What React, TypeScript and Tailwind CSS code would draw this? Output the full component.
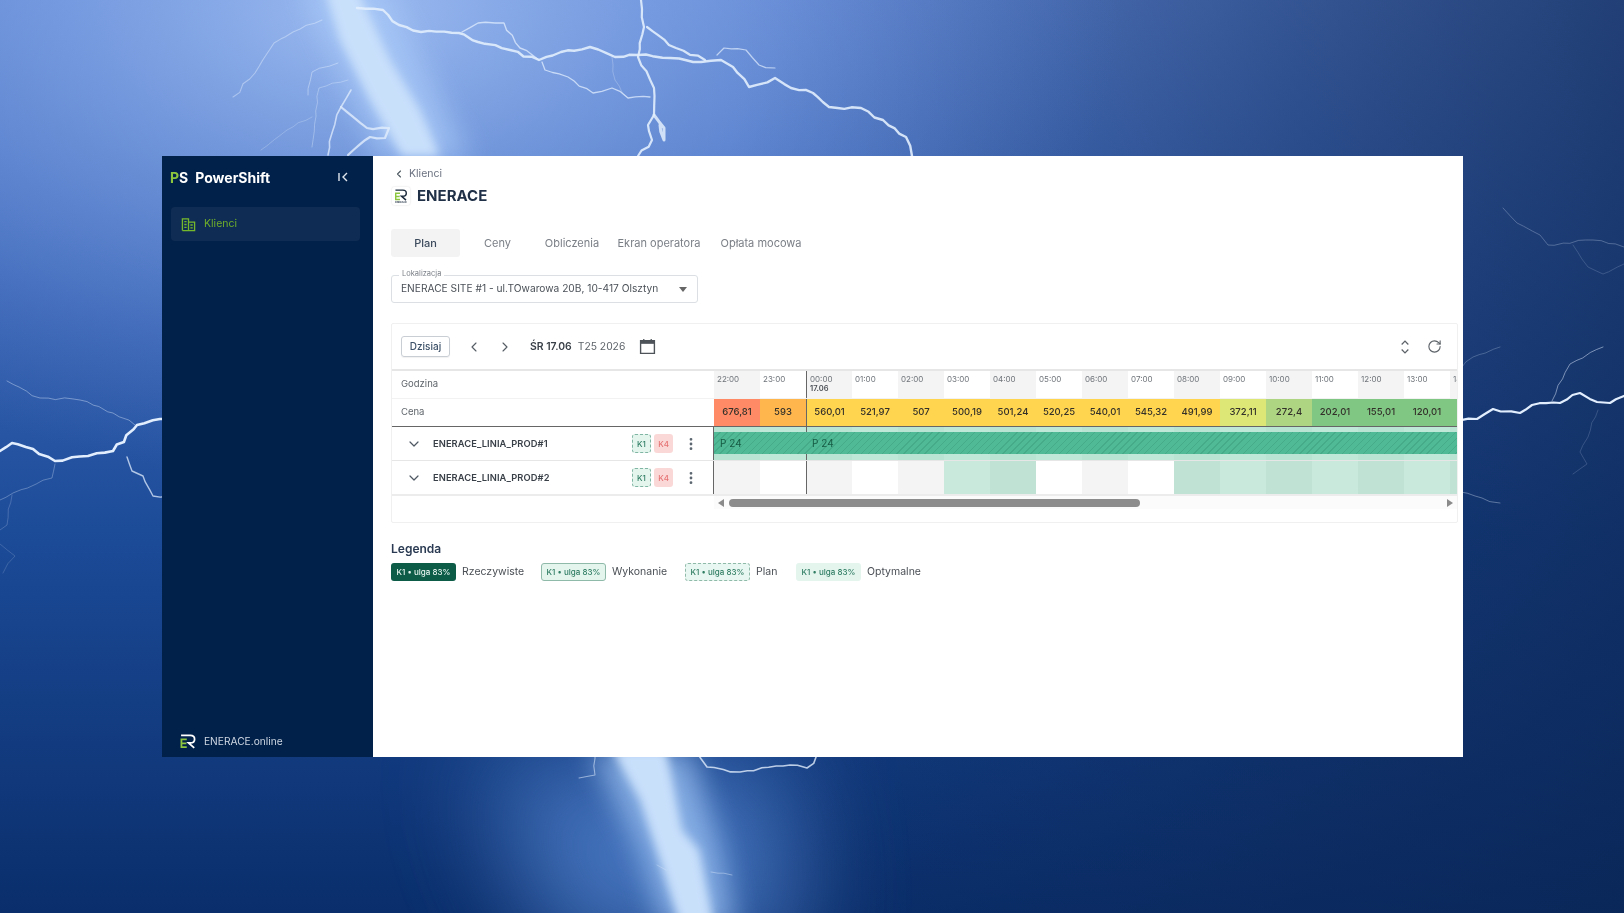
import React from "react";
import { ChevronDown, ChevronLeft, ChevronRight, EllipsisVertical, RotateCw } from "lucide-react";

const bolts: [string, number, number][] = [
  ["357,8 383,10 399,25 421,32 459,33 478,42 510,50 539,60 561,52 590,47 615,57 638,55 670,58 701,62 721,60 733,67 749,87 775,78 791,88 813,93 829,107 861,108 883,120 906,137 912,156", 2.4, 0.9],
  ["641,0 644,27 638,57 654,88 654,115 648,125 652,140 638,156", 2.2, 0.9],
  ["654,115 664,128 664,140 660,125", 3, 0.85],
  ["647,27 676,48 705,60", 2.2, 0.9],
  ["717,55 724,48 746,50 759,65 775,68", 1.2, 0.7],
  ["462,32 478,23 504,23 520,48 539,60", 1.4, 0.75],
  ["542,62 545,70 568,77 593,93 612,88 628,98 650,97", 1.3, 0.75],
  ["612,57 615,80 628,98", 0.7, 0.4],
  ["322,20 293,32 274,43 255,73 233,97", 1.1, 0.45],
  ["338,63 312,72 308,95", 0.9, 0.5],
  ["348,80 319,88 312,147", 0.9, 0.4],
  ["351,90 341,107 332,133 328,155", 1.6, 0.75],
  ["341,107 367,128 389,128 385,138 370,137 348,155", 2.2, 0.8],
  ["312,117 287,130 261,150", 0.8, 0.35],
  ["0,451 12,443 33,449 55,461 88,456 113,451 137,425 160,419 170,419", 2.6, 1],
  ["7,381 40,398 80,400 113,413 135,425", 0.9, 0.45],
  ["127,457 132,471 143,476 153,496 170,496", 1.4, 0.75],
  ["55,464 52,478 13,493 0,500", 0.9, 0.35],
  ["12,495 7,525 0,530", 0.7, 0.3],
  ["0,544 15,556 3,573", 0.7, 0.25],
  ["1455,420 1477,419 1493,409 1520,413 1532,405 1560,403 1580,393 1597,402 1610,403 1624,396", 2.2, 1],
  ["1552,401 1570,364 1603,347", 1, 0.5],
  ["1503,208 1517,223 1540,235 1548,245 1593,240 1624,247", 0.8, 0.35],
  ["1573,245 1588,267 1603,274 1624,264", 0.7, 0.25],
  ["1455,374 1473,357 1500,347", 0.8, 0.3],
  ["1455,490 1482,498 1500,503", 0.9, 0.4],
  ["1598,410 1588,437 1580,452 1587,464 1573,474", 0.7, 0.25],
  ["695,750 707,767 740,772 790,765 807,768 823,750", 1.6, 0.8],
  ["595,750 595,775 579,778", 1.1, 0.55],
  ["657,865 666,870", 0.9, 0.35],
  ["711,872 732,875", 0.9, 0.45],
];

function jag(points: string) {
  const pts = points.split(" ").map((p) => p.split(",").map(Number));
  const out: string[] = [];
  let seed = 7;
  const rnd = () => {
    seed = (seed * 9301 + 49297) % 233280;
    return seed / 233280 - 0.5;
  };
  pts.forEach(([x, y], i) => {
    out.push(`${x},${y}`);
    const next = pts[i + 1];
    if (!next) return;
    const len = Math.hypot(next[0] - x, next[1] - y);
    const n = Math.floor(len / 7);
    for (let k = 1; k < n; k++) {
      const t = k / n;
      out.push(`${(x + (next[0] - x) * t + rnd() * 3).toFixed(1)},${(y + (next[1] - y) * t + rnd() * 3).toFixed(1)}`);
    }
  });
  return out.join(" ");
}

function Background() {
  return (
    <svg className="absolute inset-0" width="1624" height="913" viewBox="0 0 1624 913">
      <defs>
        <linearGradient id="sky" x1="0" y1="0" x2="0" y2="1">
          <stop offset="0" stopColor="#5d84d2" />
          <stop offset="0.3" stopColor="#3b66b6" />
          <stop offset="0.58" stopColor="#1c4b98" />
          <stop offset="1" stopColor="#0a2e6b" />
        </linearGradient>
        <linearGradient id="shade" x1="0" y1="0" x2="1" y2="0">
          <stop offset="0.45" stopColor="#0b2553" stopOpacity="0" />
          <stop offset="0.8" stopColor="#0b2553" stopOpacity="0.5" />
          <stop offset="1" stopColor="#0b2553" stopOpacity="0.72" />
        </linearGradient>
        <radialGradient id="top" gradientUnits="userSpaceOnUse" cx="360" cy="20" r="760" gradientTransform="scale(1 0.62)">
          <stop offset="0" stopColor="#a6c4f5" stopOpacity="0.85" />
          <stop offset="0.55" stopColor="#7fa3e6" stopOpacity="0.42" />
          <stop offset="1" stopColor="#5d84d2" stopOpacity="0" />
        </radialGradient>
        <filter id="b60" x="-200%" y="-200%" width="500%" height="500%"><feGaussianBlur stdDeviation="55" /></filter>
        <filter id="b14" x="-100%" y="-100%" width="300%" height="300%"><feGaussianBlur stdDeviation="14" /></filter>
        <filter id="b5" x="-50%" y="-50%" width="200%" height="200%"><feGaussianBlur stdDeviation="5" /></filter>
        <filter id="b05" x="-10%" y="-10%" width="120%" height="120%"><feGaussianBlur stdDeviation="0.45" /></filter>
      </defs>
      <rect width="1624" height="913" fill="url(#sky)" />
      <rect width="1624" height="913" fill="url(#shade)" />
      <rect width="1624" height="600" fill="url(#top)" />
      <polygon points="480,760 780,760 800,960 560,960" fill="#5f92e0" opacity="0.7" filter="url(#b60)" />
      <polygon points="300,-20 380,-20 470,160 380,160" fill="#a9c9f8" opacity="0.75" filter="url(#b14)" />
      <polygon points="325,-10 357,-10 390,60 420,110 440,156 402,156 370,100 340,40" fill="#c9e0fb" filter="url(#b5)" />
      <polygon points="590,750 690,750 720,850 735,930 665,930 640,850" fill="#9cc2f3" opacity="0.75" filter="url(#b14)" />
      <polygon points="612,750 666,750 682,830 699,850 715,930 682,930 660,860 640,800" fill="#c9e0fb" filter="url(#b5)" />
      <g filter="url(#b05)" fill="none" strokeLinejoin="round" strokeLinecap="round">
        {bolts.map(([p, w, o], i) => (
          <polyline key={i} points={jag(p)} stroke="#e2eefd" strokeWidth={w} strokeOpacity={o} />
        ))}
      </g>
    </svg>
  );
}

function ErLogo({ top, className }: { top: string; className: string }) {
  return (
    <svg viewBox="0 0 45 42" className={className} fill="none">
      <path d="M3 4H29C36 4 41 8 41 14.5S36 25 29 25H24L40 39" stroke={top} strokeWidth="5" />
      <path d="M19 15H4V37H19M4 26H18" stroke="#8cc63f" strokeWidth="5" />
    </svg>
  );
}

const hours = ["22:00", "23:00", "00:00", "01:00", "02:00", "03:00", "04:00", "05:00", "06:00", "07:00", "08:00", "09:00", "10:00", "11:00", "12:00", "13:00", "14:00"];
const prices: [string, string][] = [
  ["676,81", "bg-[#ff8a65]"],
  ["593", "bg-[#ffb74d]"],
  ["560,01", "bg-[#ffd54f]"],
  ["521,97", "bg-[#ffd54f]"],
  ["507", "bg-[#ffd54f]"],
  ["500,19", "bg-[#ffd54f]"],
  ["501,24", "bg-[#ffd54f]"],
  ["520,25", "bg-[#ffd54f]"],
  ["540,01", "bg-[#ffd54f]"],
  ["545,32", "bg-[#ffd54f]"],
  ["491,99", "bg-[#ffd54f]"],
  ["372,11", "bg-[#dce775]"],
  ["272,4", "bg-[#aed581]"],
  ["202,01", "bg-[#81c784]"],
  ["155,01", "bg-[#81c784]"],
  ["120,01", "bg-[#81c784]"],
  ["", "bg-[#81c784]"],
];
const greenRow2 = new Set([5, 6, 10, 11, 12, 13, 14, 15, 16]);

function RowHead({ name }: { name: string }) {
  return (
    <div className="w-[322px] shrink-0 flex items-center h-full">
      <ChevronDown className="ml-[14px] w-[16px] h-[16px] text-[#4f5963] shrink-0" strokeWidth={1.8} />
      <span className="ml-[11px] flex-1 text-[9.3px] font-semibold text-[#3a4048] tracking-[0.1px]">{name}</span>
      <span className="w-[19px] h-[19px] flex items-center justify-center rounded-[3px] border border-dashed border-[#7fb5a2] bg-[#e4f5ee] text-[8px] font-medium text-[#2f7d63]">K1</span>
      <span className="ml-[3px] w-[19px] h-[19px] flex items-center justify-center rounded-[3px] bg-[#fbd8d8] text-[8px] font-medium text-[#e57373]">K4</span>
      <EllipsisVertical className="ml-[10px] mr-[15px] w-[16px] h-[16px] text-[#5c6670]" strokeWidth={2.2} />
    </div>
  );
}

function LegendItem({ badge, label, className }: { badge: string; label: string; className?: string }) {
  return (
    <div className={`flex items-center ${className ?? ""}`}>
      <span className={`w-[65px] h-[18px] rounded-[3px] flex items-center justify-center text-[8px] font-medium ${badge}`}>K1 • ulga 83%</span>
      <span className="ml-[6px] text-[10.5px] text-[#4a4f55]">{label}</span>
    </div>
  );
}

export default function App() {
  return (
    <div className="relative w-full h-[913px] overflow-hidden bg-[#0f3a7c] font-['Inter',sans-serif]">
      <Background />
      <div className="relative pt-[156px] pl-[162px] blur-[0.35px]">
        <div className="flex w-[1301px] h-[601px]">
          <aside className="w-[211px] shrink-0 flex flex-col bg-[#02214a]">
            <div className="h-[42px] flex items-center pl-[8px]">
              <span className="text-[14px] font-bold"><span className="text-[#8cc63f]">P</span><span className="text-white">S</span></span>
              <span className="ml-[7px] text-[14px] font-bold text-white">PowerShift</span>
              <svg viewBox="0 0 14 14" className="ml-auto mr-[23px] w-[14px] h-[14px]" fill="none" stroke="#dfe6ee" strokeWidth="1.4">
                <path d="M3 3V11M11 3L7 7L11 11" />
              </svg>
            </div>
            <div className="ml-[9px] mr-[13px] mt-[9px] h-[34px] rounded-[4px] bg-[#0f2c54] flex items-center pl-[10px]">
              <svg viewBox="0 0 16 16" className="w-[15px] h-[15px]" fill="none" stroke="#76b82c" strokeWidth="1.4">
                <path d="M1.5 14.5V2H8V14.5M8 5.5H14.5V14.5H1.5M3.5 5H6M3.5 8H6M3.5 11H6M10 8.5H12.5M10 11.5H12.5" />
              </svg>
              <span className="ml-[8px] text-[10.5px] text-[#6fae2a]">Klienci</span>
            </div>
            <div className="mt-auto mb-[8px] pl-[18px] flex items-center">
              <ErLogo top="#ffffff" className="w-[16px] h-[15px]" />
              <span className="ml-[8px] text-[10.2px] text-[#cdd6e2]">ENERACE.online</span>
            </div>
          </aside>
          <main className="flex-1 min-w-0 bg-white flex flex-col pl-[18px] pr-[5px]">
            <div className="mt-[10px] h-[16px] flex items-center pl-[2px] text-[#6b7280]">
              <ChevronLeft className="w-[12px] h-[12px] text-[#4f5963]" strokeWidth={2.2} />
              <span className="ml-[4px] text-[10.5px]">Klienci</span>
            </div>
            <div className="mt-[5px] h-[18px] flex items-center">
              <div className="w-[18px] h-[18px] ml-[1px] flex flex-col items-center justify-center rounded-[2px] shadow-[0_0_2px_rgba(0,0,0,0.15)]">
                <ErLogo top="#1b2a3d" className="w-[14px] h-[12px]" />
                <span className="text-[2.5px] leading-[3px] font-semibold text-[#1b2a3d]">ENERACE</span>
              </div>
              <span className="ml-[7px] text-[15px] font-bold text-[#1f3047]">ENERACE</span>
            </div>
            <div className="mt-[24px] h-[28px] flex items-center text-[11px] text-[#7a7f86]">
              <div className="w-[69px] h-full rounded-[3px] bg-[#f3f3f4] flex items-center justify-center font-medium text-[#3b4a5c]">Plan</div>
              <div className="w-[75px] text-center">Ceny</div>
              <div className="w-[74px] text-center">Obliczenia</div>
              <div className="w-[100px] text-center">Ekran operatora</div>
              <div className="ml-[2px] w-[100px] text-center">Opłata mocowa</div>
            </div>
            <div className="relative mt-[18px] w-[307px] h-[28px] rounded-[3px] border border-[#dcdfe3] flex items-center pl-[9px] pr-[10px]">
              <span className="absolute -top-[7px] left-[7px] bg-white px-[3px] text-[7.5px] leading-[10px] text-[#7a7f86]">Lokalizacja</span>
              <span className="flex-1 text-[10.2px] text-[#4b5158]">ENERACE SITE #1 - ul.TOwarowa 20B, 10-417 Olsztyn</span>
              <svg viewBox="0 0 8 5" className="w-[8px] h-[5px]"><path d="M0 0H8L4 5Z" fill="#666" /></svg>
            </div>
            <section className="mt-[20px] h-[200px] rounded-[2px] border border-[#f0f0f0] flex flex-col">
              <div className="h-[47px] shrink-0 border-b-2 border-[#e6e6e6] flex items-center pl-[9px] pr-[14px]">
                <button className="w-[49px] h-[21px] rounded-[3px] border border-[#c9ced4] shadow-[0_1px_1px_rgba(0,0,0,0.06)] text-[10px] font-medium text-[#3c5068]">Dzisiaj</button>
                <ChevronLeft className="ml-[16px] w-[16px] h-[16px] text-[#555c64]" strokeWidth={1.7} />
                <ChevronRight className="ml-[15px] w-[16px] h-[16px] text-[#555c64]" strokeWidth={1.7} />
                <span className="ml-[17px] text-[10.4px] font-semibold text-[#3a4048]">ŚR 17.06</span>
                <span className="ml-[6px] text-[10.3px] text-[#5d6369]">T25 2026</span>
                <svg viewBox="0 0 16 16" className="ml-[14px] w-[17px] h-[17px]" fill="none">
                  <path d="M1.5 2.5H14.5V14.5H1.5Z" stroke="#4d5359" strokeWidth="1.3" />
                  <path d="M1.5 2.5H14.5V5.5H1.5Z" fill="#4d5359" />
                  <path d="M4.5 1V3M11.5 1V3" stroke="#4d5359" strokeWidth="1.2" />
                </svg>
                <svg viewBox="0 0 12 18" className="ml-auto w-[10px] h-[16px]" fill="none" stroke="#5c6268" strokeWidth="1.5">
                  <path d="M2 6L6 2L10 6M2 12L6 16L10 12" />
                </svg>
                <RotateCw className="ml-[17px] mr-[1px] w-[15px] h-[15px] text-[#5c6268]" strokeWidth={1.8} />
              </div>
              <div className="h-[28px] shrink-0 flex border-b border-[#f2f2f2]">
                <div className="w-[322px] shrink-0 flex items-center pl-[9px] text-[9.5px] text-[#5f656b]">Godzina</div>
                <div className="flex-1 min-w-0 flex overflow-hidden">
                  {hours.map((h, i) => (
                    <div key={h} className={`w-[46px] shrink-0 pl-[3px] pt-[3px] text-[8px] leading-[10px] text-[#6f747a] ${i % 2 === 0 ? "bg-[#f4f4f4]" : ""} ${i === 2 ? "border-l border-[#666]" : ""}`}>
                      <div>{h}</div>
                      {i === 2 && <div className="font-semibold text-[7.5px] text-[#4a4f55]">17.06</div>}
                    </div>
                  ))}
                </div>
              </div>
              <div className="h-[28px] shrink-0 flex border-b border-[#666]">
                <div className="w-[322px] shrink-0 flex items-center pl-[9px] text-[9.5px] text-[#5f656b]">Cena</div>
                <div className="flex-1 min-w-0 flex overflow-hidden">
                  {prices.map(([p, c], i) => (
                    <div key={i} className={`w-[46px] shrink-0 flex items-center justify-center text-[9.5px] font-medium text-[#33302a] ${c} ${i === 2 ? "border-l border-[#666]" : ""}`}>{p}</div>
                  ))}
                </div>
              </div>
              <div className="h-[34px] shrink-0 flex border-b border-[#e6e6e6]">
                <RowHead name="ENERACE_LINIA_PROD#1" />
                <div className="relative flex-1 min-w-0 flex overflow-hidden border-l border-[#666] -ml-px">
                  {hours.map((h, i) => (
                    <div key={h} className={`w-[46px] shrink-0 ${i % 2 === 0 ? "bg-[#b9e3d3]" : "bg-[#c0e8d9]"} ${i === 2 ? "border-l border-[#666]" : ""}`} />
                  ))}
                  <div className="absolute left-0 right-0 top-[5px] h-[22px] flex items-center text-[10px] text-[#175c45] bg-[repeating-linear-gradient(135deg,#4fba95_0px,#4fba95_4px,#45ab88_4px,#45ab88_5px)]">
                    <span className="w-[92px] pl-[6px]">P 24</span>
                    <span className="pl-[6px]">P 24</span>
                  </div>
                </div>
              </div>
              <div className="h-[35px] shrink-0 flex border-b-2 border-[#ececec]">
                <RowHead name="ENERACE_LINIA_PROD#2" />
                <div className="flex-1 min-w-0 flex overflow-hidden border-l border-[#666] -ml-px">
                  {hours.map((h, i) => (
                    <div key={h} className={`w-[46px] shrink-0 ${greenRow2.has(i) ? (i % 2 === 0 ? "bg-[#bfe2d4]" : "bg-[#c8e9dc]") : i % 2 === 0 ? "bg-[#f4f4f4]" : "bg-white"} ${i === 2 ? "border-l border-[#666]" : ""}`} />
                  ))}
                </div>
              </div>
              <div className="flex h-[13px] shrink-0">
                <div className="w-[322px] shrink-0" />
                <div className="flex-1 min-w-0 flex items-center bg-[#fbfbfb] pl-[4px] pr-[4px]">
                  <svg viewBox="0 0 6 8" className="w-[6px] h-[8px] shrink-0"><path d="M6 0V8L0 4Z" fill="#8a8a8a" /></svg>
                  <div className="ml-[5px] w-[411px] h-[8px] rounded-full bg-[#8c8c8c]" />
                  <svg viewBox="0 0 6 8" className="ml-auto w-[6px] h-[8px] shrink-0"><path d="M0 0V8L6 4Z" fill="#8a8a8a" /></svg>
                </div>
              </div>
            </section>
            <h2 className="mt-[18px] text-[12px] leading-[16px] font-semibold text-[#2a3a52]">Legenda</h2>
            <div className="mt-[6px] flex items-center">
              <LegendItem badge="bg-[#0c5c48] text-[#e8f5ef]" label="Rzeczywiste" className="w-[150px]" />
              <LegendItem badge="bg-[#e4f5ee] text-[#2f7d63] border border-[#8fb9a9]" label="Wykonanie" className="w-[144px]" />
              <LegendItem badge="bg-[#e8f7f1] text-[#2f7d63] border border-dashed border-[#8fb9a9]" label="Plan" className="w-[111px]" />
              <LegendItem badge="bg-[#e4f5ee] text-[#2f7d63]" label="Optymalne" />
            </div>
          </main>
        </div>
      </div>
    </div>
  );
}
